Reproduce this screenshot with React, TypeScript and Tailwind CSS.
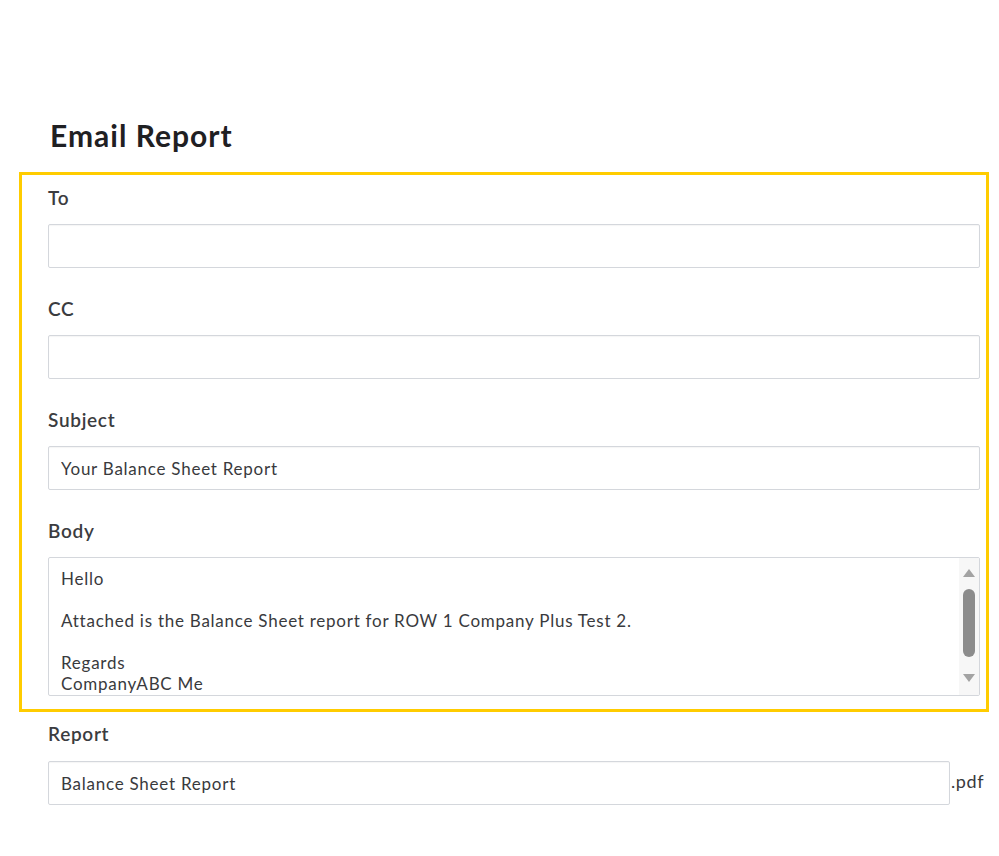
const labelCls =
  "block text-[19px] leading-[21px] font-semibold tracking-[0.7px] text-[#3b3c40] font-['Lato',sans-serif]";
const boxCls =
  "h-[44px] rounded-[2px] border border-[#d4d7dc] bg-white px-[12px] text-[17px] tracking-[0.75px] text-[#393a3d] font-['Lato',sans-serif] shadow-[inset_0_1px_1px_rgba(0,0,0,0.04)] outline-none";

function Field({ label, value }: { label: string; value?: string }) {
  return (
    <div className="flex flex-col">
      <label className={labelCls}>{label}</label>
      <input className={`${boxCls} w-full mt-[16px]`} defaultValue={value} readOnly />
    </div>
  );
}

function ScrollTrack() {
  return (
    <div className="w-[20px] bg-[#f7f7f7] flex flex-col items-center pt-[11px]">
      <span className="w-0 h-0 border-x-[6px] border-x-transparent border-b-[8px] border-b-[#a3a3a3]" />
      <span className="mt-[12px] w-[12px] h-[68px] rounded-full bg-[#8c8c8c]" />
      <span className="mt-[17px] w-0 h-0 border-x-[6px] border-x-transparent border-t-[8px] border-t-[#a3a3a3]" />
    </div>
  );
}

export default function App() {
  const bodyLines = [
    "Hello",
    "",
    "Attached is the Balance Sheet report for ROW 1 Company Plus Test 2.",
    "",
    "Regards",
    "CompanyABC Me",
  ];

  return (
    <div className="w-[999px] h-[856px] bg-white px-[19px] pt-[113px] font-['Lato',sans-serif]">
      <h1 className="ml-[31px] text-[30px] leading-[44px] font-bold tracking-[1px] text-[#1f2023]">
        Email Report
      </h1>

      <div className="mt-[15px] w-[970px] border-[3px] border-[#ffcc00] pl-[26px] pr-[6px] pt-[12px] pb-[13px] flex flex-col gap-[30px]">
        <Field label="To" />
        <Field label="CC" />
        <Field label="Subject" value="Your Balance Sheet Report" />
        <div className="flex flex-col">
          <label className={labelCls}>Body</label>
          <div className="mt-[16px] h-[139px] rounded-[2px] border border-[#d4d7dc] bg-white flex overflow-hidden">
            <div className="flex-1 px-[12px] pt-[10px] text-[17px] leading-[21px] tracking-[0.75px] text-[#393a3d] overflow-hidden">
              {bodyLines.map((line, i) => (
                <div key={i} className="h-[21px] whitespace-pre">
                  {line}
                </div>
              ))}
            </div>
            <ScrollTrack />
          </div>
        </div>
      </div>

      <div className="pl-[29px] pt-[11px]">
        <label className={labelCls}>Report</label>
        <div className="mt-[17px] flex items-center">
          <input
            className={`${boxCls} w-[902px] shrink-0`}
            defaultValue="Balance Sheet Report"
            readOnly
          />
          <span className="text-[18px] tracking-[0.6px] text-[#393a3d] ml-[1px] -mt-[4px]">.pdf</span>
        </div>
      </div>
    </div>
  );
}
